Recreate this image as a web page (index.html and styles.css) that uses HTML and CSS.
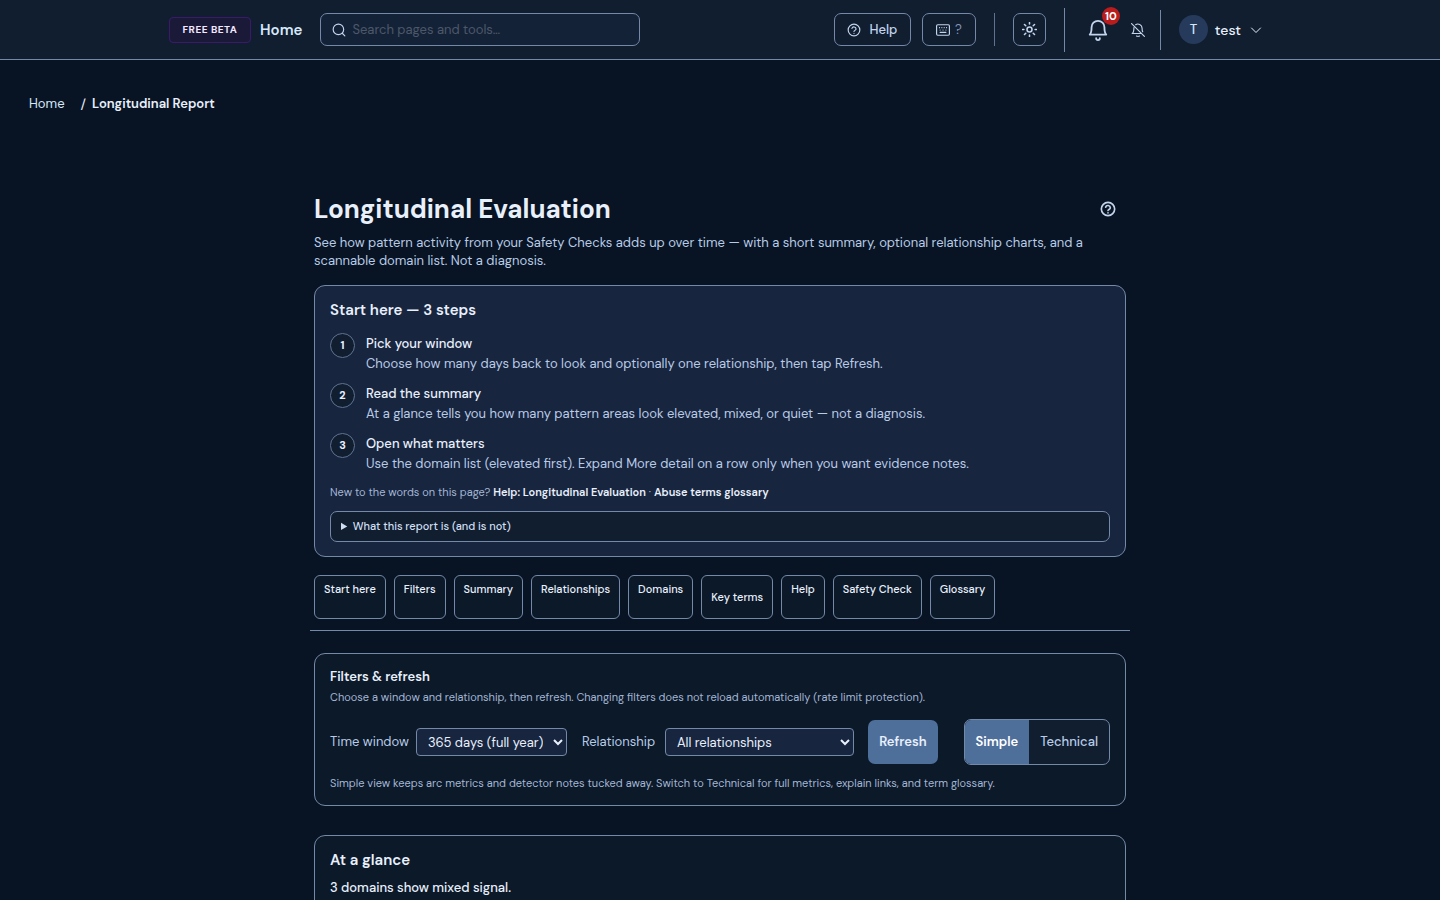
FILE: index.html
```html
<!DOCTYPE html>
<html lang="en">
<head>
  <meta charset="UTF-8">
  <meta name="viewport" content="width=device-width, initial-scale=1.0">
  <title>Longitudinal Report</title>
  <link rel="stylesheet" href="styles.css">
</head>
<body>
  <!-- shared icon shapes -->
  <svg class="icon-defs" aria-hidden="true">
    <symbol id="icon-help" viewBox="0 0 24 24">
      <circle cx="12" cy="12" r="10"/>
      <path d="M8.5 9.2a3.6 3.6 0 0 1 7 1c0 2.2-3.5 2.6-3.5 4.2M12 17.6v.1"/>
    </symbol>
  </svg>

  <header class="topbar">
    <div class="topbar-inner">
      <span class="beta-badge">FREE BETA</span>
      <a class="home-link" href="#">Home</a>
      <label class="search">
        <svg class="icon" width="14" height="14" viewBox="0 0 24 24"><circle cx="11" cy="11" r="9"/><path d="M18 18l4 4"/></svg>
        <input type="search" aria-label="Search pages and tools" placeholder="Search pages and tools…">
      </label>

      <div class="topbar-actions">
        <button class="btn-outline btn-help" type="button">
          <svg class="icon" width="14" height="14"><use href="#icon-help"/></svg>
          Help
        </button>
        <button class="btn-outline btn-keys" type="button">
          <svg class="icon" width="14" height="14" viewBox="0 0 24 24"><rect x="1" y="3" width="22" height="18" rx="2"/><path d="M6 8h.1M10 8h.1M14 8h.1M18 8h.1M7 12h.1M12 12h.1M17 12h.1M7 16h10"/></svg>
          <span>?</span>
        </button>
        <span class="divider"></span>
        <button class="btn-outline btn-theme" type="button" aria-label="Toggle theme">
          <svg class="icon icon-bold" width="15" height="15" viewBox="0 0 24 24"><circle cx="12" cy="12" r="4"/><path d="M12 1v2M12 21v2M1 12h2M21 12h2M4 4l2 2M18 18l2 2M4 20l2-2M18 6l2-2"/></svg>
        </button>
        <div class="alerts">
          <button class="btn-bell" type="button" aria-label="Notifications">
            <svg class="icon" width="22" height="22" viewBox="0 0 24 24"><path d="M3 17h18c-2-2-2-4-2-8a7 7 0 0 0-14 0c0 4 0 6-2 8z"/><path d="M10 21a2 2 0 0 0 4 0"/></svg>
            <span class="badge">10</span>
          </button>
          <button class="btn-mute" type="button" aria-label="Mute notifications">
            <svg class="icon" width="14" height="14" viewBox="0 0 24 24"><path d="M1 1l22 22M5 8c0 5 0 8-3 10h16M8 3c4-3 11 0 11 6 0 3 0 5 1 6M10 22a2 2 0 0 0 4 0"/></svg>
          </button>
        </div>
        <button class="user-menu" type="button">
          <span class="avatar">T</span>
          test
          <svg class="icon" width="12" height="12" viewBox="0 0 24 24"><path d="M3 8l9 9 9-9"/></svg>
        </button>
      </div>
    </div>
  </header>

  <nav class="breadcrumb" aria-label="Breadcrumb">
    <a href="#">Home</a>
    <span class="sep">/</span>
    <span class="current">Longitudinal Report</span>
  </nav>

  <main class="page">
    <div class="page-head">
      <h1>Longitudinal Evaluation</h1>
      <button class="btn-info" type="button" aria-label="Help">
        <svg class="icon icon-bold" width="16" height="16"><use href="#icon-help"/></svg>
      </button>
    </div>
    <p class="lead">See how pattern activity from your Safety Checks adds up over time — with a short summary, optional relationship charts, and a scannable domain list. Not a diagnosis.</p>

    <section class="card card-start">
      <h2>Start here — 3 steps</h2>
      <ol class="steps">
        <li>
          <span class="step-num">1</span>
          <div>
            <h3>Pick your window</h3>
            <p>Choose how many days back to look and optionally one relationship, then tap Refresh.</p>
          </div>
        </li>
        <li>
          <span class="step-num">2</span>
          <div>
            <h3>Read the summary</h3>
            <p>At a glance tells you how many pattern areas look elevated, mixed, or quiet — not a diagnosis.</p>
          </div>
        </li>
        <li>
          <span class="step-num">3</span>
          <div>
            <h3>Open what matters</h3>
            <p>Use the domain list (elevated first). Expand More detail on a row only when you want evidence notes.</p>
          </div>
        </li>
      </ol>
      <p class="hint">New to the words on this page? <a href="#">Help: Longitudinal Evaluation</a> · <a href="#">Abuse terms glossary</a></p>
      <details class="about">
        <summary>What this report is (and is not)</summary>
      </details>
    </section>

    <nav class="jump-nav" aria-label="On this page">
      <a href="#">Start here</a>
      <a href="#">Filters</a>
      <a href="#">Summary</a>
      <a href="#">Relationships</a>
      <a href="#">Domains</a>
      <button type="button">Key terms</button>
      <a href="#">Help</a>
      <a href="#">Safety Check</a>
      <a href="#">Glossary</a>
    </nav>

    <section class="card card-filters">
      <h3>Filters &amp; refresh</h3>
      <p class="hint">Choose a window and relationship, then refresh. Changing filters does not reload automatically (rate limit protection).</p>
      <div class="filter-row">
        <label for="window">Time window</label>
        <select id="window" class="select-window">
          <option>365 days (full year)</option>
        </select>
        <label for="relationship">Relationship</label>
        <select id="relationship" class="select-rel">
          <option>All relationships</option>
        </select>
        <button class="btn-refresh" type="button">Refresh</button>
        <div class="view-toggle">
          <button class="active" type="button">Simple</button>
          <button type="button">Technical</button>
        </div>
      </div>
      <p class="hint">Simple view keeps arc metrics and detector notes tucked away. Switch to Technical for full metrics, explain links, and term glossary.</p>
    </section>

    <section class="card card-glance">
      <h2>At a glance</h2>
      <p>3 domains show mixed signal.</p>
    </section>
  </main>
</body>
</html>
```
FILE: styles.css
```css
* {
  box-sizing: border-box;
}
body {
  margin: 0;
  background: #081423;
  color: #e8f0fc;
  font-family: "DM Sans", Roboto, "Open Sans", sans-serif;
  font-size: 13px;
  line-height: 18px;
}
h1, h2, h3, p {
  margin: 0;
}
a {
  color: inherit;
  text-decoration: none;
}
button, input, select {
  font: inherit;
  color: inherit;
}
button {
  background: none;
  border: none;
  padding: 0;
  cursor: pointer;
}
.icon {
  fill: none;
  stroke: currentColor;
  stroke-width: 2;
  stroke-linecap: round;
  stroke-linejoin: round;
  flex: none;
}
.icon-bold {
  stroke-width: 2.5;
}
.icon-defs {
  display: none;
}

/* top bar */
.topbar {
  background: #101e30;
  border-bottom: 1px solid #7488a8;
}
.topbar-inner {
  display: flex;
  align-items: center;
  height: 59px;
  max-width: 1102px;
  margin: 0 auto;
  padding-right: 9px;
}
.beta-badge {
  width: 82px;
  padding: 4px 0;
  border: 1px solid #3b1a6b;
  border-radius: 4px;
  background: #1a1a38;
  color: #f3e8ff;
  font-size: 10px;
  font-weight: 700;
  letter-spacing: 0.5px;
  line-height: 16px;
  text-align: center;
}
.home-link {
  margin-left: 9px;
  color: #d6e8fa;
  font-size: 15px;
  font-weight: 600;
}
.search {
  display: flex;
  align-items: center;
  gap: 6px;
  width: 320px;
  height: 33px;
  margin-left: 18px;
  padding: 0 11px;
  border: 1px solid #7488a8;
  border-radius: 7px;
  background: #142238;
  color: #c4d4ec;
}
.search input {
  flex: 1;
  min-width: 0;
  padding: 0;
  border: none;
  outline: none;
  background: none;
}
.search input::placeholder {
  color: #4c5868;
  opacity: 1;
}
.topbar-actions {
  display: flex;
  align-items: center;
  margin-left: auto;
}
.btn-outline {
  display: flex;
  align-items: center;
  justify-content: center;
  gap: 8px;
  height: 33px;
  border: 1px solid #7488a8;
  border-radius: 7px;
  color: #c4d4ec;
}
.btn-help {
  width: 77px;
  font-weight: 500;
}
.btn-keys {
  gap: 5px;
  width: 54px;
  margin-left: 11px;
}
.btn-keys span {
  color: #8294b0;
}
.btn-theme {
  width: 33px;
}
.divider {
  width: 1px;
  height: 33px;
  margin: 0 18px;
  background: #5f7391;
}
.alerts {
  display: flex;
  align-items: center;
  height: 44px;
  margin-left: 18px;
  padding: 0 15px 0 22px;
  border-left: 1px solid #7488a8;
  color: #c4d4ec;
}
.btn-bell {
  position: relative;
  display: flex;
}
.badge {
  position: absolute;
  top: -12px;
  right: -11px;
  width: 18px;
  height: 18px;
  border-radius: 50%;
  background: #b91c1c;
  color: #fff;
  font-size: 11px;
  font-weight: 700;
  text-align: center;
}
.btn-mute {
  display: flex;
  margin-left: 22px;
}
.user-menu {
  display: flex;
  align-items: center;
  height: 40px;
  padding-left: 18px;
  border-left: 1px solid #7488a8;
  font-size: 14px;
  font-weight: 500;
}
.user-menu .icon {
  margin-left: 9px;
}
.avatar {
  width: 29px;
  height: 29px;
  margin-right: 7px;
  border-radius: 50%;
  background: #263b5c;
  color: #d6e8fa;
  font-size: 13px;
  line-height: 29px;
}

.breadcrumb {
  display: flex;
  padding: 35px 29px 0;
}
.breadcrumb a {
  color: #d6e8fa;
}
.breadcrumb .sep {
  margin: 0 6px 0 16px;
  font-size: 14px;
}
.breadcrumb .current {
  font-weight: 600;
}

/* content column */
.page {
  max-width: 812px;
  margin: 0 auto;
  padding: 78px 0 40px;
}
.page-head {
  display: flex;
  align-items: center;
  justify-content: space-between;
  padding-right: 10px;
}
.page-head h1 {
  font-size: 26px;
  font-weight: 700;
  line-height: 36px;
}
.btn-info {
  display: flex;
  color: #c4d4ec;
}
.lead {
  margin-top: 7px;
  color: #b8cbe6;
}
.card {
  padding: 15px;
  border: 1px solid #7488a8;
  border-radius: 11px;
  background: #0c1929;
}
.card h2 {
  font-size: 15px;
  font-weight: 600;
}
.card h3 {
  font-size: 13px;
  font-weight: 600;
}
.hint {
  color: #a3b6d4;
  font-size: 11px;
  line-height: 16px;
}
.hint a {
  color: #e8f0fc;
  font-weight: 600;
}

/* start card */
.card-start {
  margin-top: 15px;
  padding-bottom: 14px;
  background: #18253f;
}
.steps {
  margin: 14px 0 10px;
  padding: 0;
  list-style: none;
}
.steps li {
  display: flex;
  gap: 11px;
  line-height: 20px;
}
.steps li + li {
  margin-top: 9px;
}
.steps h3 {
  font-weight: 500;
  line-height: 21px;
}
.steps p {
  color: #b8cbe6;
}
.step-num {
  flex: none;
  width: 25px;
  height: 25px;
  border: 1px solid #5f7391;
  border-radius: 50%;
  background: #101e30;
  font-size: 11px;
  font-weight: 700;
  line-height: 23px;
  text-align: center;
}
.about {
  margin-top: 11px;
  padding: 6px 10px;
  border: 1px solid #7488a8;
  border-radius: 7px;
  background: #101e30;
  color: #d0def2;
  font-size: 11px;
  font-weight: 500;
  line-height: 17px;
}
.about summary {
  cursor: pointer;
}

/* section links */
.jump-nav {
  display: flex;
  flex-wrap: wrap;
  gap: 8px;
  margin: 14px -4px 0;
  padding: 4px 4px 11px;
  border-bottom: 1px solid #7488a8;
}
.jump-nav a,
.jump-nav button {
  height: 44px;
  padding: 4px 9px;
  border: 1px solid #7488a8;
  border-radius: 6px;
  background: #0c1929;
  font-size: 11px;
  font-weight: 500;
}

/* filters */
.card-filters {
  margin-top: 22px;
  padding: 14px 15px;
}
.card-filters h3 {
  margin-bottom: 3px;
}
.filter-row {
  display: flex;
  align-items: center;
  margin: 14px 0 10px;
}
.filter-row label {
  min-width: 76px;
  color: #b8cbe6;
}
.filter-row select {
  height: 28px;
  margin: 0 15px 0 7px;
  padding: 0 7px;
  border: 1px solid #7488a8;
  border-radius: 4px;
  background: #18253f;
}
.filter-row .select-window {
  width: 151px;
}
.filter-row .select-rel {
  width: 189px;
  margin-right: 14px;
}
.btn-refresh {
  width: 70px;
  height: 44px;
  border-radius: 7px;
  background: #4f6f9b;
  font-weight: 600;
}
.view-toggle {
  display: flex;
  height: 46px;
  margin-left: auto;
  border: 1px solid #7488a8;
  border-radius: 7px;
  background: #101e30;
  overflow: hidden;
}
.view-toggle button {
  padding: 0 11px;
  color: #b8cbe6;
  font-weight: 500;
}
.view-toggle .active {
  background: #4f6f9b;
  color: #fff;
  font-weight: 600;
}

.card-glance {
  margin-top: 29px;
}
.card-glance p {
  margin-top: 10px;
  font-weight: 500;
}
```
